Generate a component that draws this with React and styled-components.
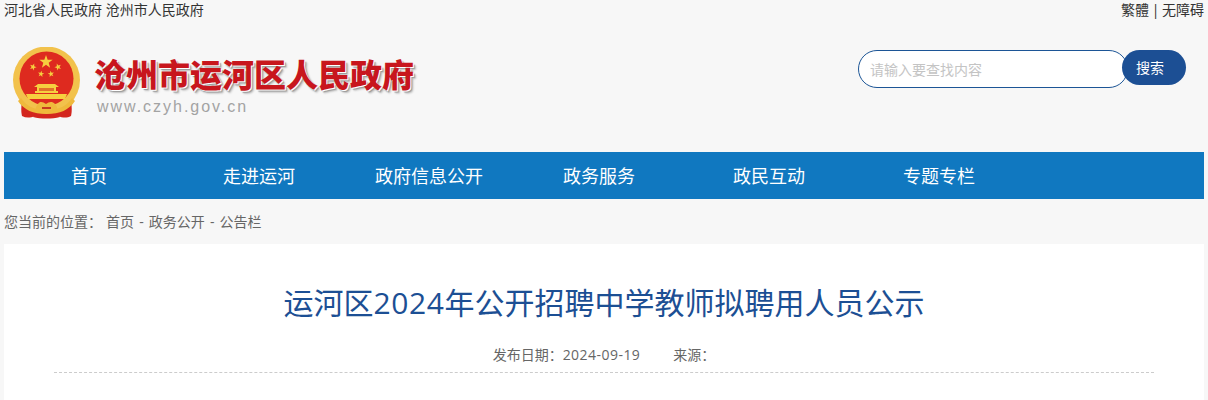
import React from "react";
import styled, { createGlobalStyle } from "styled-components";

const Global = createGlobalStyle`
  html, body { margin: 0; padding: 0; background: #f7f7f7; }
  body { font-family: "Open Sans", "Noto Sans CJK SC", sans-serif; color: #333; }
  * { box-sizing: border-box; }
`;

const Page = styled.div`
  width: 1208px;
  height: 400px;
  overflow: hidden;
  padding: 0 4px;
`;

const TopBar = styled.div`
  display: flex;
  justify-content: space-between;
  height: 20px;
  font-size: 14px;
  line-height: 20px;
  color: #333;
`;

const AccessLinks = styled.span`
  word-spacing: -1px;
`;

const Header = styled.header`
  display: flex;
  justify-content: space-between;
  height: 132px;
`;

const Brand = styled.div`
  display: flex;
  align-items: flex-start;
  padding: 27px 0 0 9px;
  gap: 13px;
`;

const BrandText = styled.div`
  display: flex;
  flex-direction: column;
  padding-top: 8px;
`;

const BrandName = styled.div`
  font-family: "Noto Sans CJK SC", sans-serif;
  font-weight: 900;
  font-size: 32px;
  line-height: 36px;
  color: #c8161d;
  text-shadow: 1px 1px 0 #fff, 2px 2px 1px #9a9a9a, 3px 3px 2px #c4c4c4;
  white-space: nowrap;
`;

const BrandUrl = styled.div`
  font-family: "Liberation Sans", sans-serif;
  font-size: 16px;
  line-height: 20px;
  letter-spacing: 1.97px;
  color: #a3a3a3;
  margin: 6px 0 0 3px;
`;

const Search = styled.form`
  display: flex;
  align-items: flex-start;
  margin: 30px 18px 0 0;
`;

const SearchInput = styled.input`
  width: 270px;
  height: 38px;
  border: 1px solid #1c5596;
  border-radius: 19px;
  background: #fff;
  padding: 0 12px 0 11px;
  font: 400 14px "Open Sans", "Noto Sans CJK SC", sans-serif;
  outline: none;
  &::placeholder { color: #c4c4c4; opacity: 1; }
`;

const SearchButton = styled.button`
  width: 64px;
  height: 35px;
  margin-left: -6px;
  padding: 0 8px 2px 0;
  border: 0;
  border-radius: 18px;
  background: #1c4f94;
  color: #fff;
  font: 400 14px "Open Sans", "Noto Sans CJK SC", sans-serif;
  position: relative;
`;

const Nav = styled.nav`
  display: flex;
  height: 47px;
  background: #1078c0;
`;

const NavItem = styled.a`
  width: 170px;
  height: 47px;
  text-align: center;
  font-size: 18px;
  line-height: 49px;
  color: #fff;
`;

const Crumb = styled.div`
  height: 45px;
  font-size: 14px;
  line-height: 46px;
  color: #666;
  word-spacing: 1.5px;
`;

const CrumbLabel = styled.span`
  margin-right: 4px;
`;

const Article = styled.article`
  background: #fff;
  height: 156px;
  padding: 0 50px;
`;

const Title = styled.h1`
  margin: 0;
  padding-top: 37px;
  text-align: center;
  font-size: 30px;
  line-height: 44px;
  font-weight: 400;
  color: #1c4f94;
`;

const Digits = styled.span`
  letter-spacing: ${(p) => p.$spacing};
`;

const Meta = styled.div`
  display: flex;
  justify-content: center;
  gap: 33px;
  margin-top: 19px;
  height: 29px;
  font-size: 14px;
  line-height: 22px;
  color: #666;
  border-bottom: 1px dashed #ccc;
`;

const Star = ({ x, y, r, rot = 0 }) => {
  const pts = [];
  for (let i = 0; i < 10; i++) {
    const rad = i % 2 ? r * 0.4 : r;
    const a = ((i * 36 - 90 + rot) * Math.PI) / 180;
    pts.push(`${(x + rad * Math.cos(a)).toFixed(2)},${(y + rad * Math.sin(a)).toFixed(2)}`);
  }
  return <polygon points={pts.join(" ")} fill="#f6cf3f" />;
};

const Emblem = () => (
  <svg width="68" height="72" viewBox="0 0 68 72" style={{ flex: "none" }}>
    <path d="M9 54c-1 6-1 11 0 15 4 2 8 2 13 0l3-10z" fill="#d3261e" />
    <path d="M58 54c1 6 1 11 0 15-4 2-8 2-13 0l-3-10z" fill="#d3261e" />
    <path d="M22 66h23l2 4c-8 2-19 2-27 0z" fill="#d3261e" />
    <circle cx="33.5" cy="33" r="33.5" fill="#f2c24c" />
    <circle cx="33.5" cy="31.5" r="27" fill="#de2a1f" />
    <Star x={33} y={15} r={7} />
    <Star x={20} y={20} r={3.6} rot={20} />
    <Star x={45} y={20} r={3.6} rot={-20} />
    <Star x={28} y={27} r={3.3} rot={10} />
    <Star x={38} y={27} r={3.3} rot={-10} />
    <path d="M25 37h17l4 3h-3v4h2v2H22v-2h2v-4h-3z" fill="#f6cf3f" />
    <path d="M26 41h15v3H26z" fill="#e2722a" />
    <path d="M13 47h41l-2 5H15z" fill="#f6cf3f" />
    <path d="M8 51c5 8 13 12 25.500 12S54 59 59 51l3 3c-6 9-15 13-28.500 13S11 63 5 54z" fill="#efb93c" />
    <path d="M25 57c2-3 5-2 8 0 3-2 6-3 9 0 2 2 3 5 1 7-2 1-3 0-5-2-2 2-8 2-10 0-2 2-3 3-5 2-1-2 0-5 2-7z" fill="#efb93c" />
    <path d="M29 60h9v2h-9z" fill="#c63a20" />
  </svg>
);

const navItems = ["首页", "走进运河", "政府信息公开", "政务服务", "政民互动", "专题专栏"];

export default function App() {
  return (
    <Page>
      <Global />
      <TopBar>
        <span>河北省人民政府 沧州市人民政府</span>
        <AccessLinks>繁體 | 无障碍</AccessLinks>
      </TopBar>
      <Header>
        <Brand>
          <Emblem />
          <BrandText>
            <BrandName>沧州市运河区人民政府</BrandName>
            <BrandUrl>www.czyh.gov.cn</BrandUrl>
          </BrandText>
        </Brand>
        <Search onSubmit={(e) => e.preventDefault()}>
          <SearchInput placeholder="请输入要查找内容" />
          <SearchButton type="button">搜索</SearchButton>
        </Search>
      </Header>
      <Nav>
        {navItems.map((n) => (
          <NavItem key={n}>{n}</NavItem>
        ))}
      </Nav>
      <Crumb>
        <CrumbLabel>您当前的位置：</CrumbLabel>首页 - 政务公开 - 公告栏
      </Crumb>
      <Article>
        <Title>运河区<Digits $spacing="0.02em">2024</Digits>年公开招聘中学教师拟聘用人员公示</Title>
        <Meta>
          <span>发布日期：<Digits $spacing="0.033em">2024-09-19</Digits></span>
          <span>来源：</span>
        </Meta>
      </Article>
    </Page>
  );
}
